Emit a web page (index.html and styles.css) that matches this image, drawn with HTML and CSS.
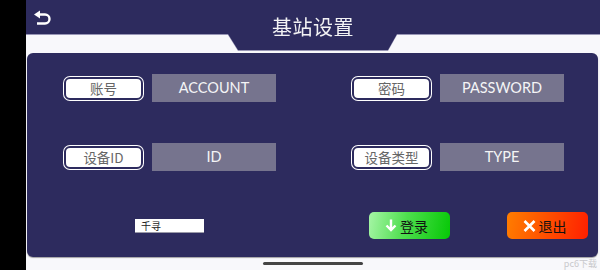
FILE: index.html
```html
<!DOCTYPE html>
<html lang="zh">

<head>
    <meta charset="UTF-8">
    <meta name="viewport" content="width=device-width, initial-scale=1.0">
    <title>基站设置</title>
    <link rel="stylesheet" href="styles.css">
</head>

<body>

    <div class="side-bar"></div>

    <div class="main">
        <!-- En-tête avec onglet central -->
        <div class="header-wrap">
            <div class="header">
                <div class="back-btn">
                    <svg width="20" height="17" viewBox="0 0 20 17">
                        <path d="M3 4.5 H12 A4.5 4.5 0 0 1 12 13.5 H4" fill="none" stroke="#fff" stroke-width="2.4" />
                        <path d="M1 4.5 L7 0.5 L7 8.5 Z" fill="#fff" />
                    </svg>
                </div>
                <h2 class="title">基站设置</h2>
                <div></div>
            </div>
        </div>

        <div class="panel">
            <div class="row">
                <div class="field">
                    <div class="field-label">账号</div>
                    <div class="field-input">ACCOUNT</div>
                </div>
                <div class="field">
                    <div class="field-label">密码</div>
                    <div class="field-input">PASSWORD</div>
                </div>
            </div>

            <div class="row">
                <div class="field">
                    <div class="field-label">设备ID</div>
                    <div class="field-input">ID</div>
                </div>
                <div class="field">
                    <div class="field-label">设备类型</div>
                    <div class="field-input">TYPE</div>
                </div>
            </div>

            <div class="row actions">
                <div class="small-input">千寻</div>
                <button type="button" class="btn btn-login">
                    <svg width="12" height="13" viewBox="0 0 12 13">
                        <path d="M6 0.5 V11 M1.5 6.5 L6 11 L10.5 6.5" fill="none" stroke="#fff" stroke-width="2.4" />
                    </svg>
                    登录
                </button>
                <button type="button" class="btn btn-exit">
                    <svg width="13" height="12" viewBox="0 0 13 12">
                        <path d="M1.5 1 L11.5 11 M11.5 1 L1.5 11" fill="none" stroke="#fff" stroke-width="2.6" />
                    </svg>
                    退出
                </button>
            </div>
        </div>

        <div class="footer">
            <div class="home-bar"></div>
            <span class="watermark">pc6下载</span>
        </div>
    </div>

</body>
</html>
```

FILE: styles.css
```css
body {
    margin: 0;
    width: 600px;
    height: 270px;
    display: flex;
    overflow: hidden;
    background-color: #f8f8fb;
    font-family: "Noto Sans CJK SC", "Noto Sans", sans-serif;
}

.side-bar {
    width: 26px;
    flex-shrink: 0;
    background-color: #000;
}

.main {
    flex: 1;
    display: flex;
    flex-direction: column;
    position: relative;
}

.header-wrap {
    filter: drop-shadow(0 1px 0 #9896b6);
}

.header {
    height: 50px;
    background-color: #2d2b5e;
    display: grid;
    grid-template-columns: 1fr auto 1fr;
    clip-path: polygon(0 0, 574px 0, 574px 34px, 371px 34px, 362px 50px, 212px 50px, 202px 34px, 0 34px);
}

.back-btn {
    padding: 8px 0 0 7px;
}

.title {
    margin: 16px 0 0 0;
    font-size: 20px;
    line-height: 22px;
    font-weight: normal;
    color: #f2f2f4;
    letter-spacing: 0.5px;
}

.panel {
    height: 183px;
    margin: 3px 2px 0 1px;
    padding: 21px 0 0 36px;
    background-color: #2d2b5e;
    border-radius: 6px;
    box-shadow: 0 1px 1px rgba(0, 0, 0, 0.35);
    display: flex;
    flex-direction: column;
    gap: 41px;
}

.row {
    display: flex;
    gap: 75px;
    height: 28px;
}

.field {
    display: flex;
    align-items: center;
    gap: 8px;
}

.field-label {
    width: 75px;
    height: 19px;
    margin: 0 1px;
    border: 2px solid #2d2b5e;
    border-radius: 6px;
    box-shadow: 0 0 0 1px #fff;
    background-color: #fff;
    color: #666;
    font-size: 13.5px;
    line-height: 19px;
    text-align: center;
}

.field-input {
    width: 124px;
    height: 28px;
    background-color: #76748e;
    color: #f4f4f6;
    font-family: Lato, "Noto Sans", sans-serif;
    font-size: 14.5px;
    line-height: 28px;
    text-align: center;
}

.actions {
    gap: 0;
    align-items: center;
    height: 27px;
}

.small-input {
    width: 63px;
    height: 13px;
    margin-left: 72px;
    padding-left: 6px;
    background-color: #fff;
    border-bottom: 1px solid #9a9aa8;
    color: #222;
    font-size: 10px;
    line-height: 13px;
}

.btn {
    width: 81px;
    height: 27px;
    border: none;
    border-radius: 5px;
    display: flex;
    align-items: center;
    justify-content: center;
    gap: 3px;
    padding: 0 6px 0 0;
    font-family: "Noto Sans CJK SC", sans-serif;
    font-size: 14px;
    color: #111;
    cursor: pointer;
}

.btn-login {
    margin-left: 165px;
    background: linear-gradient(100deg, #a6f5a6 0%, #4ede4e 45%, #06c806 100%);
}

.btn-exit {
    margin-left: 57px;
    background: linear-gradient(100deg, #ff7d00 0%, #ff4a00 55%, #ff2000 100%);
}

.footer {
    flex: 1;
    display: flex;
    justify-content: center;
    align-items: center;
}

.home-bar {
    width: 100px;
    height: 3px;
    border-radius: 2px;
    background-color: #444;
}

.watermark {
    position: absolute;
    right: 3px;
    bottom: 0;
    font-size: 9px;
    color: #c8c8cc;
}
```
